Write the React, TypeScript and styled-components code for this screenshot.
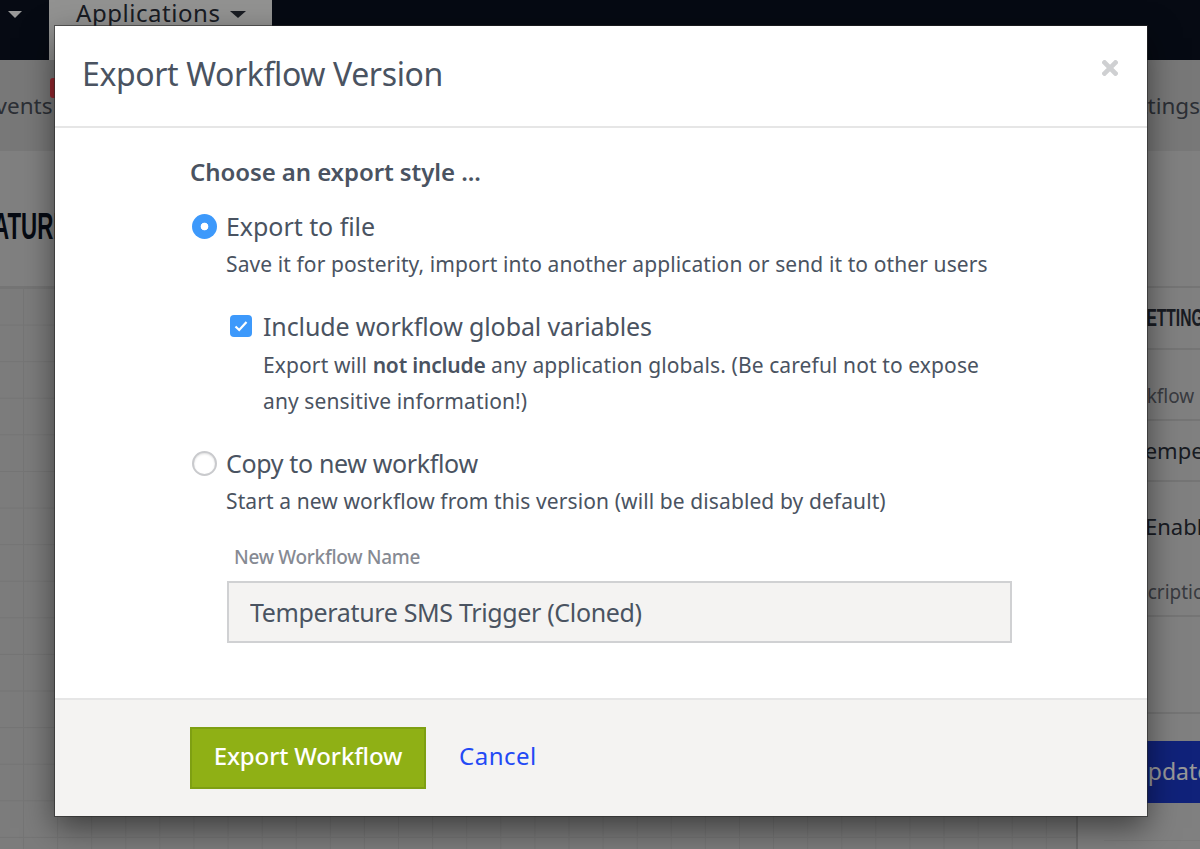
import { createGlobalStyle, styled } from "styled-components";

const GlobalStyle = createGlobalStyle`
  html, body {
    margin: 0;
    padding: 0;
    height: 100%;
    overflow: hidden;
    background: #d6d6d6;
    font-family: "Noto Sans", "Open Sans", sans-serif;
  }
  * { box-sizing: border-box; }
`;

export default function App() {
  return (
    <>
      <GlobalStyle />
      <Page>
        <TopBar>
          <MenuCaret />
          <AppTab>
            Applications
            <TabCaret />
          </AppTab>
        </TopBar>
        <SubNav>
          <SubNavItem>
            Events
            <Badge />
          </SubNavItem>
          <SubNavItem>Settings</SubNavItem>
        </SubNav>
        <Workspace>
          <Main>
            <TitleBand>
              <PageTitle>TEMPERATURE SMS TRIGGER</PageTitle>
            </TitleBand>
            <Canvas />
          </Main>
          <Sidebar>
            <SidebarBand />
            <SidebarHeading>
              <span>SETTINGS</span>
            </SidebarHeading>
            <FieldLabel>Workflow Name</FieldLabel>
            <FieldValue>Temperature</FieldValue>
            <EnableRow>Enabled</EnableRow>
            <DescriptionRow>Description</DescriptionRow>
            <SidebarGap />
            <UpdateButton>Update</UpdateButton>
            <SidebarFoot />
          </Sidebar>
        </Workspace>

        <Overlay>
          <Modal>
            <ModalHeader>
              <ModalTitle>Export Workflow Version</ModalTitle>
              <CloseButton aria-label="Close">
                <svg width="16" height="16" viewBox="0 0 16 16">
                  <path d="M2.5 2.5 13.5 13.5M13.5 2.5 2.5 13.5" stroke="#cfd0d2" strokeWidth="4.6" strokeLinecap="square" fill="none" />
                </svg>
              </CloseButton>
            </ModalHeader>
            <ModalBody>
              <StyleHeading>Choose an export style ...</StyleHeading>
              <OptionRow>
                <RadioOn />
                <OptionLabel $tracking={-0.05}>Export to file</OptionLabel>
              </OptionRow>
              <Hint>Save it for posterity, import into another application or send it to other users</Hint>
              <CheckRow>
                <CheckBox>
                  <svg width="16" height="14" viewBox="0 0 16 14">
                    <path d="M2.5 7.5 6.2 11 13.5 3" stroke="#fff" strokeWidth="2.2" fill="none" />
                  </svg>
                </CheckBox>
                <OptionLabel $tracking={-0.12}>Include workflow global variables</OptionLabel>
              </CheckRow>
              <CheckHint>
                Export will <strong>not include</strong> any application globals. (Be careful not to expose
                <br />
                any sensitive information!)
              </CheckHint>
              <OptionRow $top={26}>
                <RadioOff />
                <OptionLabel $tracking={-0.35}>Copy to new workflow</OptionLabel>
              </OptionRow>
              <Hint>Start a new workflow from this version (will be disabled by default)</Hint>
              <NameField>
                <NameLabel>New Workflow Name</NameLabel>
                <NameInput readOnly value="Temperature SMS Trigger (Cloned)" />
              </NameField>
            </ModalBody>
            <ModalFooter>
              <ExportButton>Export Workflow</ExportButton>
              <CancelLink href="#">Cancel</CancelLink>
            </ModalFooter>
          </Modal>
        </Overlay>
      </Page>
    </>
  );
}

const Page = styled.div`
  position: relative;
  width: 1200px;
  height: 849px;
  overflow: hidden;
  display: flex;
  flex-direction: column;
  background: #d6d6d6;
`;

const TopBar = styled.div`
  flex: none;
  height: 60px;
  background: #0a1221;
  display: flex;
  align-items: flex-start;
  padding-left: 49px;
  position: relative;
`;

const MenuCaret = styled.span`
  position: absolute;
  left: 8px;
  top: 11px;
  border-left: 7px solid transparent;
  border-right: 7px solid transparent;
  border-top: 7px solid #fff;
`;

const AppTab = styled.div`
  width: 223px;
  height: 60px;
  background: #f4f3f2;
  color: #2a2f3a;
  font-size: 24px;
  letter-spacing: 0.55px;
  line-height: 26px;
  padding-left: 27px;
  display: flex;
  align-items: flex-start;
`;

const TabCaret = styled.span`
  margin: 11px 0 0 9px;
  border-left: 8px solid transparent;
  border-right: 8px solid transparent;
  border-top: 7px solid #2a2f3a;
`;

const SubNav = styled.div`
  flex: none;
  height: 91px;
  background: #c9c9c9;
  display: flex;
  justify-content: space-between;
  align-items: center;
  margin: 0 0 0 -17px;
  border-bottom: 1px solid #c8c8c8;
  color: #4a4f59;
  font-size: 22.5px;
`;

const SubNavItem = styled.div`
  position: relative;
`;

const Badge = styled.span`
  position: absolute;
  left: 67px;
  top: -12px;
  width: 20px;
  height: 20px;
  border-radius: 3px;
  background: #ff4450;
`;

const Workspace = styled.div`
  flex: 1;
  display: flex;
  min-height: 0;
`;

const Main = styled.div`
  flex: none;
  width: 1078px;
  display: flex;
  flex-direction: column;
  border-right: 2px solid #b4b4b4;
`;

const TitleBand = styled.div`
  flex: none;
  height: 137px;
  border-bottom: 2px solid #c4c4c4;
  display: flex;
  align-items: center;
  white-space: nowrap;
  padding-top: 16px;
  margin-right: -2px;
`;

const PageTitle = styled.h1`
  margin: 0 0 0 -100px;
  font-family: "Liberation Sans", sans-serif;
  font-size: 36px;
  font-weight: 700;
  color: #0a1221;
  transform: scaleX(0.62);
  transform-origin: left center;
`;

const Canvas = styled.div`
  flex: 1;
  background-color: #cfcfcf;
  background-image:
    linear-gradient(to right, #c3c3c3 1px, transparent 1px),
    linear-gradient(to bottom, #c3c3c3 1px, transparent 1px);
  background-size: 34.1px 36.6px;
  background-position: 23px 0;
`;

const Sidebar = styled.div`
  flex: none;
  width: 122px;
  overflow: hidden;
  display: flex;
  flex-direction: column;
  background: #d6d6d6;
  white-space: nowrap;
`;

const SidebarBand = styled.div`
  height: 137px;
  border-bottom: 2px solid #c4c4c4;
  flex: none;
`;

const SidebarHeading = styled.div`
  flex: none;
  height: 62px;
  border-bottom: 2px solid #c4c4c4;
  padding-left: 58px;
  font-family: "Liberation Sans", sans-serif;
  font-weight: 700;
  font-size: 24px;
  line-height: 60px;
  color: #2a2f3a;

  span {
    display: inline-block;
    transform: scaleX(0.65);
    transform-origin: left center;
  }
`;

const FieldLabel = styled.div`
  flex: none;
  height: 71px;
  border-bottom: 2px solid #c4c4c4;
  padding: 32px 0 0 32px;
  font-size: 19px;
  line-height: 28px;
  color: #5f636c;
`;

const FieldValue = styled.div`
  flex: none;
  height: 61px;
  border-bottom: 2px solid #c4c4c4;
  padding-left: 56px;
  font-size: 22px;
  line-height: 58px;
  color: #2a2f3a;
`;

const EnableRow = styled.div`
  flex: none;
  height: 69px;
  padding-left: 67px;
  font-size: 22px;
  line-height: 88px;
  color: #2a2f3a;
`;

const DescriptionRow = styled.div`
  flex: none;
  height: 66px;
  border-bottom: 2px solid #c4c4c4;
  padding: 21px 0 0 36px;
  font-size: 19px;
  line-height: 40px;
  color: #5f636c;
`;

const SidebarGap = styled.div`
  flex: none;
  height: 97px;
  border-bottom: 2px solid #c4c4c4;
`;

const UpdateButton = styled.div`
  flex: none;
  margin-top: 27px;
  height: 62px;
  background: #1b39cc;
  color: #fff;
  font-size: 23px;
  line-height: 60px;
  padding-left: 53px;
`;

const SidebarFoot = styled.div`
  flex: none;
  margin: 37px 0 0 26px;
  border-top: 1px solid #cbcbcb;
`;

const Overlay = styled.div`
  position: absolute;
  inset: 0;
  background: rgba(0, 0, 0, 0.4);
`;

const Modal = styled.div`
  margin: 26px 0 0 55px;
  width: 1092px;
  height: 790px;
  background: #fff;
  display: flex;
  flex-direction: column;
  outline: 1px solid rgba(40, 40, 40, 0.6);
  box-shadow: 0 12px 30px rgba(0, 0, 0, 0.5);
`;

const ModalHeader = styled.div`
  flex: none;
  height: 102px;
  border-bottom: 2px solid #e6e6e6;
  padding: 0 28px 0 27px;
  display: flex;
  justify-content: space-between;
  align-items: flex-start;
`;

const ModalTitle = styled.h2`
  margin: 25px 0 0;
  font-size: 32px;
  letter-spacing: -0.38px;
  line-height: 46px;
  font-weight: 400;
  color: #4a5361;
`;

const CloseButton = styled.button`
  margin: 34px 1px 0 0;
  padding: 0;
  border: 0;
  background: none;
  line-height: 0;
`;

const ModalBody = styled.div`
  flex: 1;
  padding: 26px 0 0 135px;
  color: #4a5361;
`;

const StyleHeading = styled.div`
  font-size: 24px;
  letter-spacing: -0.08px;
  line-height: 36px;
  font-weight: 600;
`;

const OptionRow = styled.div<{ $top?: number }>`
  display: flex;
  align-items: center;
  gap: 9px;
  height: 36px;
  margin-top: ${(p) => p.$top ?? 18}px;
`;

const RadioOn = styled.span`
  margin-left: 2px;
  width: 25px;
  height: 25px;
  border-radius: 50%;
  background: radial-gradient(circle, #fff 0 3.5px, #3d99fb 4.2px);
`;

const RadioOff = styled.span`
  margin-left: 2px;
  width: 25px;
  height: 25px;
  border-radius: 50%;
  background: #fff;
  border: 2px solid #c9cacd;
  box-shadow: inset 0 1px 2px rgba(0, 0, 0, 0.12);
`;

const OptionLabel = styled.span<{ $tracking: number }>`
  font-size: 25px;
  letter-spacing: ${(p) => p.$tracking}px;
  line-height: 36px;
`;

const Hint = styled.div`
  margin: 2px 0 0 36px;
  font-size: 21px;
  letter-spacing: 0.1px;
  line-height: 36px;
`;

const CheckRow = styled.div`
  display: flex;
  align-items: center;
  gap: 11px;
  height: 36px;
  margin: 26px 0 0 40px;
`;

const CheckBox = styled.span`
  width: 22px;
  height: 22px;
  border-radius: 4px;
  background: #3d99fb;
  display: flex;
  align-items: center;
  justify-content: center;
`;

const CheckHint = styled.div`
  margin: 3px 0 0 73px;
  font-size: 21px;
  letter-spacing: 0.11px;
  line-height: 36px;

  strong {
    font-weight: 600;
    letter-spacing: -0.2px;
  }
`;

const NameField = styled.div`
  margin: 24px 0 0 37px;
  width: 785px;
`;

const NameLabel = styled.div`
  margin-left: 7px;
  font-size: 19px;
  letter-spacing: -0.3px;
  line-height: 28px;
  font-weight: 500;
  color: #868a93;
`;

const NameInput = styled.input`
  display: block;
  margin-top: 10px;
  width: 785px;
  height: 62px;
  padding: 0 21px;
  border: 2px solid #d0d1d3;
  border-radius: 0;
  background: #f4f3f2;
  font-family: inherit;
  font-size: 25px;
  letter-spacing: -0.35px;
  color: #4a5361;
  outline: none;
`;

const ModalFooter = styled.div`
  flex: none;
  height: 118px;
  background: #f4f3f2;
  border-top: 2px solid #e6e6e6;
  padding: 27px 0 0 135px;
  display: flex;
  align-items: flex-start;
  gap: 33px;
`;

const ExportButton = styled.button`
  width: 236px;
  height: 62px;
  padding: 0 0 6px;
  border: 2px solid #7e9f12;
  border-radius: 0;
  background: #8fb015;
  color: #fff;
  font-family: inherit;
  font-size: 24px;
  letter-spacing: -0.13px;
  font-weight: 500;
`;

const CancelLink = styled.a`
  font-size: 24px;
  letter-spacing: 0.5px;
  line-height: 58px;
  color: #2349f5;
  text-decoration: none;
`;
